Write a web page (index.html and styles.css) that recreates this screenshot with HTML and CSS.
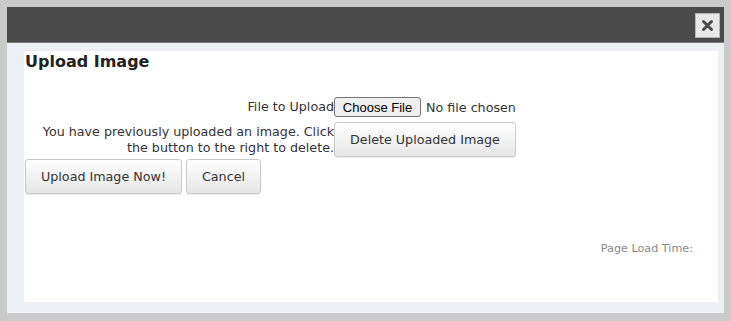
FILE: index.html
```html
<!DOCTYPE html>
<html lang="en">
<head>
    <meta charset="UTF-8">
    <meta name="viewport" content="width=device-width, initial-scale=1.0">
    <title>Upload Image</title>
    <link rel="stylesheet" href="styles.css">
</head>
<body>
    <div class="dialog">
        <div class="dialog-bar">
            <button class="close" title="Close">
                <svg width="13" height="13" viewBox="0 0 13 13">
                    <path d="M2.5 2.5 L10.5 10.5 M10.5 2.5 L2.5 10.5" stroke="#4a4a4a" stroke-width="3" stroke-linecap="round"/>
                </svg>
            </button>
        </div>
        <div class="dialog-body">
            <div class="page">
                <h2 class="title">Upload Image</h2>
                <form class="upload-form">
                    <label class="label" for="file">File to Upload</label>
                    <input class="file" type="file" id="file">
                    <div class="label">You have previously uploaded an image. Click the button to the right to delete.</div>
                    <div><button type="button" class="btn delete">Delete Uploaded Image</button></div>
                </form>
                <div class="actions">
                    <button type="button" class="btn">Upload Image Now!</button>
                    <button type="button" class="btn">Cancel</button>
                </div>
                <div class="load-time">Page Load Time:</div>
            </div>
        </div>
    </div>
</body>
</html>
```

FILE: styles.css
```css
body {
    margin: 0;
    padding: 7px;
    background: #cacaca;
    font-family: "DejaVu Sans", Verdana, sans-serif;
    font-size: 12.7px;
    color: #333;
}
.dialog {
    width: 717px;
    height: 306px;
    display: flex;
    flex-direction: column;
    background: #eceff4;
}
.dialog-bar {
    height: 36px;
    background: #4a4a4a;
    border-bottom: 1px solid #7a7a7a;
    display: flex;
    justify-content: flex-end;
    align-items: flex-start;
    padding: 6px 4px 0 0;
    box-sizing: border-box;
}
.close {
    width: 25px;
    height: 25px;
    padding: 0;
    display: flex;
    align-items: center;
    justify-content: center;
    background: #e9e9e9;
    border: 1px solid #b5b5b5;
    cursor: pointer;
}
.dialog-body {
    flex: 1;
    padding: 8px 6px 11px 17px;
    display: flex;
}
.page {
    flex: 1;
    background: #fff;
    padding: 0 0 0 1px;
    display: flex;
    flex-direction: column;
}
.title {
    margin: 0;
    padding-top: 1px;
    font-size: 16px;
    font-weight: bold;
    color: #222;
    line-height: 20px;
}
.upload-form {
    display: grid;
    grid-template-columns: 309px auto;
    align-items: center;
    row-gap: 5px;
    margin-top: 25px;
}
.label {
    text-align: right;
    line-height: 16px;
    padding-left: 10px;
}
.file {
    font-family: "DejaVu Sans", Verdana, sans-serif;
    font-size: 12.7px;
    color: #333;
}
.file::file-selector-button {
    font-family: "Liberation Sans", Arial, sans-serif;
    font-size: 13px;
    height: 20px;
    width: 87px;
    margin-right: 5px;
    background: #efefef;
    border: 1px solid #767676;
    border-radius: 3px;
    color: #000;
}
.btn {
    height: 35px;
    padding: 0 15px;
    font-family: "DejaVu Sans", Verdana, sans-serif;
    font-size: 12.7px;
    color: #333;
    background: linear-gradient(#ffffff, #e6e6e6);
    border: 1px solid #c9c9c9;
    border-radius: 3px;
    box-shadow: 0 1px 1px rgba(0, 0, 0, 0.08);
    cursor: pointer;
}
.btn:hover {
    background: #e6e6e6;
}
.delete {
    width: 182px;
}
.actions {
    display: flex;
    gap: 4px;
    margin-top: 2px;
}
.load-time {
    margin-top: 48px;
    padding-right: 25px;
    text-align: right;
    font-size: 11.2px;
    color: #888;
}
```
